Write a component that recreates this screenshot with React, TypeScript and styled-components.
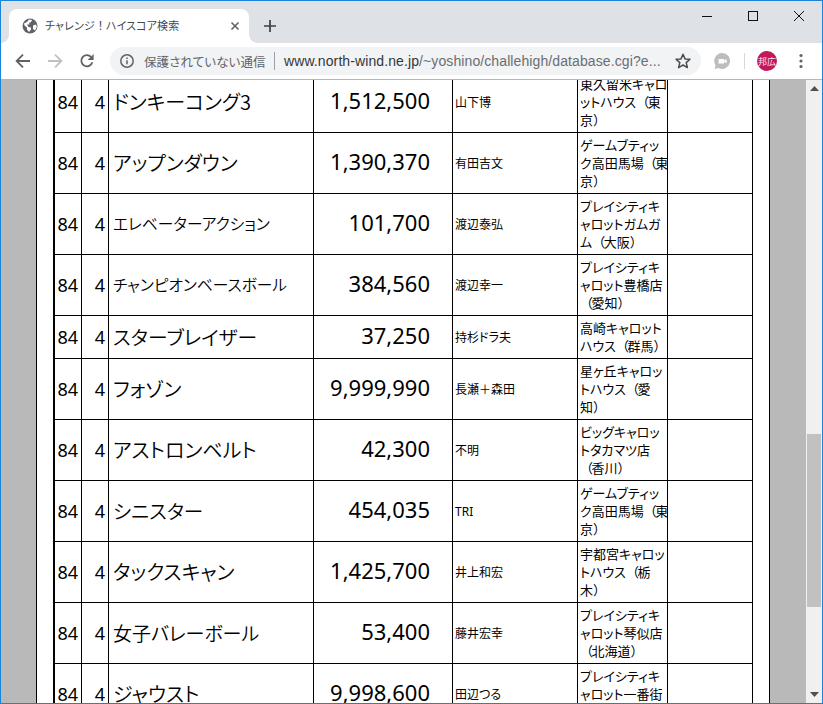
import React from "react";
import styled, { createGlobalStyle } from "styled-components";

const Global = createGlobalStyle`
  html, body { margin: 0; padding: 0; height: 100%; overflow: hidden; background: #fff; }
  body { font-family: "Noto Sans", "Noto Sans CJK JP", sans-serif; }
`;

const Win = styled.div`
  width: 823px; height: 704px; box-sizing: border-box;
  border: 1px solid #1a84da; display: flex; flex-direction: column; overflow: hidden;
`;
const TitleBar = styled.div`
  height: 42px; flex: none; background: #dee1e6; display: flex; align-items: flex-end; padding-left: 8px;
`;
const Tab = styled.div`
  position: relative; width: 240px; height: 34px; box-sizing: border-box; background: #fff;
  border-radius: 8px 8px 0 0; display: flex; align-items: center; padding: 0 9px 0 13px;
  &::before, &::after { content: ""; position: absolute; bottom: 0; width: 8px; height: 8px; }
  &::before { left: -8px; background: radial-gradient(circle at 0 0, transparent 7.5px, #fff 8px); }
  &::after { right: -8px; background: radial-gradient(circle at 100% 0, transparent 7.5px, #fff 8px); }
`;
const TabTitle = styled.span`
  flex: 1; margin-left: 7px; font-size: 11px; line-height: 16px; color: #45484c; white-space: nowrap;
  font-feature-settings: "palt"; letter-spacing: .15px;
`;
const NewTab = styled.div`
  width: 28px; height: 28px; margin: 0 0 3px 7px; display: flex; align-items: center; justify-content: center;
`;
const WinButtons = styled.div`
  margin-left: auto; align-self: flex-start; display: flex; height: 30px;
`;
const WinButton = styled.div`
  width: 46px; height: 30px; display: flex; align-items: center; justify-content: center;
`;
const Toolbar = styled.div`
  height: 36px; flex: none; background: #fff; border-bottom: 1px solid #b5b5b5; display: flex; align-items: center;
  padding-left: 6px;
`;
const NavBtn = styled.div`
  width: 32px; height: 28px; display: flex; align-items: center; justify-content: center; flex: none;
`;
const Omnibox = styled.div`
  margin-left: 7px; width: 591px; height: 28px; border-radius: 14px; background: #f1f3f4; flex: none;
  display: flex; align-items: center; padding: 0 9px 0 9px; box-sizing: border-box;
`;
const Security = styled.span`
  margin-left: 9px; font-size: 12.5px; color: #5f6368; white-space: nowrap; width: 122px; flex: none;
  letter-spacing: .1px; font-family: "Noto Sans CJK JP", sans-serif; font-feature-settings: "palt";
`;
const OmniSep = styled.div`
  width: 1px; height: 18px; background: #9aa0a6; margin: 0 9px 0 8px; flex: none;
`;
const Url = styled.span`
  width: 375px; flex: none; font-size: 14px; color: #6a6e73; white-space: nowrap; font-family: "Liberation Sans", sans-serif;
  letter-spacing: .1px;
  b { font-weight: 400; color: #35373a; }
`;
const Star = styled.div`
  margin-left: auto; width: 18px; height: 18px; display: flex;
`;
const Ext = styled.div`
  margin-left: 12px; width: 18px; height: 18px; flex: none; display: flex;
`;
const ToolSep = styled.div`
  width: 1px; height: 16px; background: #d6d8da; margin: 0 12px 0 13px; flex: none;
`;
const Avatar = styled.div`
  width: 20px; height: 20px; border-radius: 50%; background: #c2185b; color: #fbe4ec; font-size: 9px; flex: none;
  display: flex; align-items: center; justify-content: center; font-family: "Noto Sans CJK JP", sans-serif;
`;
const Menu = styled.div`
  margin-left: 16px; width: 16px; height: 16px; display: flex; flex: none;
`;
const Viewport = styled.div`
  flex: 1; min-height: 0; display: flex; overflow: hidden; background: #b9b9b9;
`;
const PageArea = styled.div`
  flex: 1; min-width: 0; padding-left: 35px; overflow: hidden;
`;
const Sheet = styled.div`
  width: 734px; height: 100%; box-sizing: border-box; background: #fff;
  border-left: 1px solid #000; border-right: 1px solid #000; padding-left: 16px; overflow: hidden;
`;
const Table = styled.table`
  width: 700px; margin-top: -8px; table-layout: fixed; border-collapse: separate; border-spacing: 0;
  border-left: 2px solid #000; color: #000;
`;
const Cell = styled.td`
  border-right: 1px solid #000; border-bottom: 1px solid #000; padding: 3px 3px 3px 2px; vertical-align: middle;
  overflow: hidden;
`;
const NumCell = styled(Cell)`
  font-size: 18px; line-height: 24px; text-align: right; font-weight: 400;
`;
const TitleCell = styled(Cell)<{ $size: number }>`
  font-family: "Noto Sans CJK JP", sans-serif;
  font-size: ${p => p.$size}px; line-height: 26px; padding-left: 4px; white-space: nowrap;
  font-feature-settings: "palt"; font-weight: 350;
`;
const ScoreCell = styled(Cell)`
  font-size: 22px; line-height: 28px; text-align: right; padding: 0 22px 5px 2px; font-weight: 400;
`;
const PersonCell = styled(Cell)`
  font-size: 12px; line-height: 18px; white-space: nowrap; font-feature-settings: "palt"; padding-top: 5px;
`;
const Wide = styled.span`
  font-feature-settings: normal;
`;
const VenueCell = styled(Cell)`
  font-size: 13px; line-height: 18px; white-space: nowrap; font-feature-settings: "palt";
  ${Wide} { letter-spacing: -1.5px; }
`;
const Scrollbar = styled.div`
  width: 16px; flex: none; background: #f0f0f0; display: flex; flex-direction: column; align-items: stretch;
`;
const ScrollArrow = styled.div`
  height: 17px; flex: none; display: flex; align-items: center; justify-content: center;
`;
const Thumb = styled.div`
  height: 173px; margin: 337px 0 0 1px; background: #c1c1c1; width: 14px;
`;
const ScrollSpacer = styled.div` flex: 1; `;

const rows = [
  ["ドンキーコング3", 20, "1,512,500", "山下博", ["東久留米キャロ", "ットハウス\uFF08東", "京\uFF09"]],
  ["アップンダウン", 20, "1,390,370", "有田吉文", ["ゲームブティッ", "ク高田馬場\uFF08東", "京\uFF09"]],
  ["エレベーターアクション", 15.7, "101,700", "渡辺泰弘", ["プレイシティキ", "ャロットガムガ", "ム\uFF08大阪\uFF09"]],
  ["チャンピオンベースボール", 15.7, "384,560", "渡辺幸一", ["プレイシティキ", "ャロット豊橋店", "\uFF08愛知\uFF09"]],
  ["スターブレイザー", 19.8, "37,250", "持杉ドラ夫", ["高崎キャロット", "ハウス\uFF08群馬\uFF09"]],
  ["フォゾン", 20, "9,999,990", "長瀬\uFF0B森田", ["星ヶ丘キャロッ", "トハウス\uFF08愛", "知\uFF09"]],
  ["アストロンベルト", 20, "42,300", "不明", ["ビッグキャロッ", "トタカマツ店", "\uFF08香川\uFF09"]],
  ["シニスター", 19.6, "454,035", "TRI", ["ゲームブティッ", "ク高田馬場\uFF08東", "京\uFF09"]],
  ["タックスキャン", 20, "1,425,700", "井上和宏", ["宇都宮キャロッ", "トハウス\uFF08栃", "木\uFF09"]],
  ["女子バレーボール", 19, "53,400", "藤井宏幸", ["プレイシティキ", "ャロット琴似店", "\uFF08北海道\uFF09"]],
  ["ジャウスト", 20, "9,998,600", "田辺つる", ["プレイシティキ", "ャロット一番街", "店"]],
] as [string, number, string, string, string[]][];

const widths = [27, 27, 205, 139, 125, 90, 85];

function FullWidth({ text }: { text: string }) {
  return (
    <>
      {text.split(/([\uFF08\uFF09\uFF01\uFF0B])/).map((part, i) =>
        /^[\uFF08\uFF09\uFF01\uFF0B]$/.test(part) ? <Wide key={i}>{part}</Wide> : part
      )}
    </>
  );
}

export default function App() {
  return (
    <>
      <Global />
      <Win>
        <TitleBar>
          <Tab>
            <svg width="16" height="16" viewBox="0 0 16 16">
              <circle cx="8" cy="8" r="7.5" fill="#5f6368" />
              <path d="M2 5.5 5 4l2-2.5 3 .5-1 2-2 1 .5 1.5H5L6.5 9 9 9.5v2L7 14 5 11.5 5 9.5 2.5 7.5zM11 7.5l3-1 .8 2.5-1.8 3.5-2-1.5z" fill="#fff" />
            </svg>
            <TabTitle><FullWidth text={"チャレンジ\uFF01ハイスコア検索"} /></TabTitle>
            <svg width="10" height="10" viewBox="0 0 10 10">
              <path d="M1.5 1.5l7 7M8.5 1.5l-7 7" stroke="#5f6368" strokeWidth="1.6" fill="none" />
            </svg>
          </Tab>
          <NewTab>
            <svg width="12" height="12" viewBox="0 0 12 12">
              <path d="M6 0v12M0 6h12" stroke="#3c4043" strokeWidth="1.7" />
            </svg>
          </NewTab>
          <WinButtons>
            <WinButton>
              <svg width="10" height="10" viewBox="0 0 10 10"><path d="M0 5.5h10" stroke="#111" strokeWidth="1" /></svg>
            </WinButton>
            <WinButton>
              <svg width="10" height="10" viewBox="0 0 10 10"><rect x=".5" y=".5" width="9" height="9" fill="none" stroke="#111" strokeWidth="1" /></svg>
            </WinButton>
            <WinButton>
              <svg width="10" height="10" viewBox="0 0 10 10"><path d="M0 0l10 10M10 0L0 10" stroke="#111" strokeWidth="1" /></svg>
            </WinButton>
          </WinButtons>
        </TitleBar>
        <Toolbar>
          <NavBtn>
            <svg width="16" height="16" viewBox="0 0 16 16">
              <path d="M15 8H2M8 1.6 1.6 8 8 14.4" stroke="#5f6368" strokeWidth="1.8" fill="none" />
            </svg>
          </NavBtn>
          <NavBtn>
            <svg width="16" height="16" viewBox="0 0 16 16">
              <path d="M1 8h13M8 1.6 14.4 8 8 14.4" stroke="#bdc1c6" strokeWidth="1.8" fill="none" />
            </svg>
          </NavBtn>
          <NavBtn>
            <svg width="16" height="16" viewBox="0 0 16 16">
              <path d="M13.3 9.2A5.6 5.6 0 1 1 12 3.9" stroke="#5f6368" strokeWidth="1.8" fill="none" />
              <path d="M14.6 1v6h-6z" fill="#5f6368" />
            </svg>
          </NavBtn>
          <Omnibox>
            <svg width="16" height="16" viewBox="0 0 16 16">
              <circle cx="8" cy="8" r="6.2" fill="none" stroke="#5f6368" strokeWidth="1.5" />
              <path d="M8 7.2v4M8 4.6v1.5" stroke="#5f6368" strokeWidth="1.5" />
            </svg>
            <Security>保護されていない通信</Security>
            <OmniSep />
            <Url><b>www.north-wind.ne.jp</b>/~yoshino/challehigh/database.cgi?e...</Url>
            <Star>
              <svg width="18" height="18" viewBox="0 0 18 18">
                <path d="M9 2.2l2 4.7 5 .4-3.8 3.3 1.2 5L9 13l-4.4 2.6 1.2-5L2 7.3l5-.4z" fill="none" stroke="#4a4d51" strokeWidth="1.5" strokeLinejoin="round" />
              </svg>
            </Star>
          </Omnibox>
          <Ext>
            <svg width="18" height="18" viewBox="0 0 18 18">
              <path d="M9 1a8 8 0 1 1-3.6 15.1L1.6 17l.9-3.7A8 8 0 0 1 9 1z" fill="#bdbdbd" />
              <path d="M5.5 7h5.5v4.4H5.5zM11 8.5l2.6-1.4v4.2L11 9.9z" fill="#fff" />
            </svg>
          </Ext>
          <ToolSep />
          <Avatar>邦広</Avatar>
          <Menu>
            <svg width="16" height="16" viewBox="0 0 16 16">
              <circle cx="8" cy="2.5" r="1.6" fill="#5f6368" />
              <circle cx="8" cy="8" r="1.6" fill="#5f6368" />
              <circle cx="8" cy="13.5" r="1.6" fill="#5f6368" />
            </svg>
          </Menu>
        </Toolbar>
        <Viewport>
          <PageArea>
            <Sheet>
              <Table>
                <colgroup>
                  {widths.map((w, i) => <col key={i} width={w} />)}
                </colgroup>
                <tbody>
                  {rows.map(([title, size, score, person, venue], i) => (
                    <tr key={i}>
                      <NumCell>84</NumCell>
                      <NumCell>4</NumCell>
                      <TitleCell $size={size}>{title}</TitleCell>
                      <ScoreCell>{score}</ScoreCell>
                      <PersonCell><FullWidth text={person} /></PersonCell>
                      <VenueCell>
                        {venue.map((l, j) => <div key={j}><FullWidth text={l} /></div>)}
                      </VenueCell>
                      <Cell />
                    </tr>
                  ))}
                </tbody>
              </Table>
            </Sheet>
          </PageArea>
          <Scrollbar>
            <ScrollArrow>
              <svg width="9" height="5" viewBox="0 0 9 5"><path d="M4.5 0L9 5H0z" fill="#505050" /></svg>
            </ScrollArrow>
            <Thumb />
            <ScrollSpacer />
            <ScrollArrow>
              <svg width="9" height="5" viewBox="0 0 9 5"><path d="M4.5 5L9 0H0z" fill="#505050" /></svg>
            </ScrollArrow>
          </Scrollbar>
        </Viewport>
      </Win>
    </>
  );
}
